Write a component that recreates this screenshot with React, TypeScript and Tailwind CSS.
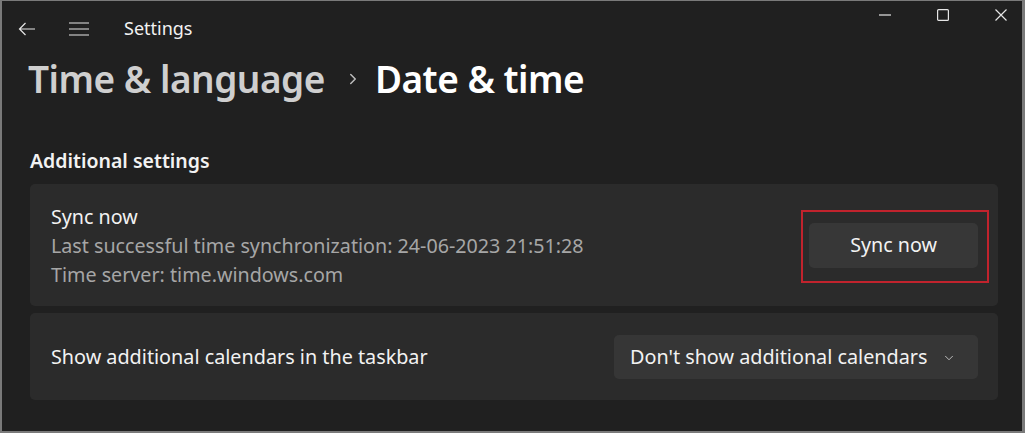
import { ChevronDown, ChevronRight } from "lucide-react";

const font = { fontFamily: '"Noto Sans", "Open Sans", sans-serif' };

function TitleBar() {
  return (
    <div className="flex h-[55px] items-center">
      <svg width="18" height="14" viewBox="0 0 18 14" className="ml-[16px]" fill="none" stroke="#e6e6e6" strokeWidth="1.2">
        <path d="M17 7H1.5M7.5 1L1.5 7l6 6" />
      </svg>
      <svg width="20" height="14" viewBox="0 0 20 14" className="ml-[33px]" fill="none" stroke="#e6e6e6" strokeWidth="1.2">
        <path d="M0 1h20M0 7h20M0 13h20" />
      </svg>
      <span className="ml-[35px] text-[18px] text-[#f2f2f2]">Settings</span>
      <div className="mr-[-8px] ml-auto flex h-full items-start">
        <button className="flex h-[27px] w-[58px] items-center justify-center">
          <svg width="12" height="2" viewBox="0 0 12 2"><path d="M0 1h12" stroke="#e6e6e6" strokeWidth="1.2" /></svg>
        </button>
        <button className="flex h-[27px] w-[58px] items-center justify-center">
          <svg width="12" height="12" viewBox="0 0 12 12" fill="none"><rect x="0.6" y="0.6" width="10.8" height="10.8" rx="1" stroke="#e6e6e6" strokeWidth="1.2" /></svg>
        </button>
        <button className="flex h-[27px] w-[58px] items-center justify-center">
          <svg width="12" height="12" viewBox="0 0 12 12"><path d="M0.5 0.5l11 11M11.5 0.5l-11 11" stroke="#e6e6e6" strokeWidth="1.2" /></svg>
        </button>
      </div>
    </div>
  );
}

export default function App() {
  return (
    <div
      className="h-[433px] w-[1025px] overflow-hidden border-t border-b-2 border-l-2 border-r-[3px] border-[#7a7a7a] bg-[#202020] text-white"
      style={font}
    >
      <TitleBar />

      <div className="flex h-[46px] items-center pl-[26px] text-[37px] font-semibold tracking-[-0.5px]">
        <span className="text-[#cfcfcf]">Time &amp; language</span>
        <ChevronRight className="ml-[19px] mr-[13px] text-[#bdbdbd]" size={18} strokeWidth={2} />
        <span className="text-white">Date &amp; time</span>
      </div>

      <h2 className="mt-[46px] h-[26px] pl-[28px] text-[19.5px] leading-[26px] font-semibold text-[#f2f2f2]">
        Additional settings
      </h2>

      <div className="mt-[10px] flex flex-col gap-[7px] pl-[28px] pr-[24px]">
        <div className="flex h-[122px] items-center rounded-[5px] bg-[#2b2b2b] pl-[21px] pr-[20px]">
          <div className="flex-1 text-[19.7px] leading-[29px]">
            <div className="text-[#f2f2f2]">Sync now</div>
            <div className="text-[#a6a6a6]">Last successful time synchronization: 24-06-2023 21:51:28</div>
            <div className="text-[#a6a6a6]">Time server: time.windows.com</div>
          </div>
          <div className="relative">
            <button className="h-[45px] w-[169px] rounded-[5px] bg-[#373737] text-[19.7px] text-[#f2f2f2]">
              Sync now
            </button>
            <div className="absolute top-[-13px] right-[-11px] bottom-[-15px] left-[-8px] border-2 border-[#c1232d]" />
          </div>
        </div>

        <div className="flex h-[87px] items-center rounded-[5px] bg-[#2b2b2b] pl-[21px] pr-[20px]">
          <div className="flex-1 text-[19.8px] text-[#f2f2f2]">Show additional calendars in the taskbar</div>
          <button className="flex h-[44px] w-[364px] items-center rounded-[5px] bg-[#363636] pl-[16px] pr-[22px] text-[19.8px] text-[#f2f2f2]">
            <span className="flex-1 text-left">Don&apos;t show additional calendars</span>
            <ChevronDown size={14} strokeWidth={1.5} className="mt-[2px] text-[#cfcfcf]" />
          </button>
        </div>
      </div>
    </div>
  );
}
